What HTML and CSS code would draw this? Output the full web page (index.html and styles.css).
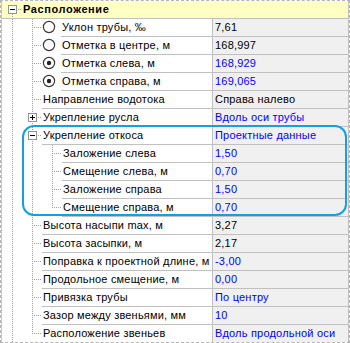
FILE: index.html
```html
<!DOCTYPE html>
<html lang="ru">
<head>
    <meta charset="UTF-8">
    <title>Свойства трубы</title>
    <link rel="stylesheet" href="styles.css">
</head>
<body>

<div class="frame">
    <div class="grid">
        <!-- Заголовок группы -->
        <div class="row head">
            <span class="g root"><i class="box minus"></i></span>
            <span class="label">Расположение</span>
        </div>

        <div class="row">
            <div class="name">
                <span class="g v"></span><span class="g t"></span>
                <span class="g rb"><svg width="14" height="14" viewBox="0 0 14 14"><circle cx="7" cy="7" r="5.6" fill="#fff" stroke="#3a3a3a" stroke-width="1.2"/></svg></span>
                <span class="label">Уклон трубы, ‰</span>
            </div>
            <div class="value">7,61</div>
        </div>
        <div class="row">
            <div class="name">
                <span class="g v"></span><span class="g t"></span>
                <span class="g rb"><svg width="14" height="14" viewBox="0 0 14 14"><circle cx="7" cy="7" r="5.6" fill="#fff" stroke="#3a3a3a" stroke-width="1.2"/></svg></span>
                <span class="label">Отметка в центре, м</span>
            </div>
            <div class="value">168,997</div>
        </div>
        <div class="row">
            <div class="name">
                <span class="g v"></span><span class="g t"></span>
                <span class="g rb"><svg width="14" height="14" viewBox="0 0 14 14"><circle cx="7" cy="7" r="5.6" fill="#fff" stroke="#3a3a3a" stroke-width="1.2"/><circle cx="7" cy="7" r="2.2" fill="#222"/></svg></span>
                <span class="label">Отметка слева, м</span>
            </div>
            <div class="value blue">168,929</div>
        </div>
        <div class="row">
            <div class="name">
                <span class="g v"></span><span class="g t"></span>
                <span class="g rb"><svg width="14" height="14" viewBox="0 0 14 14"><circle cx="7" cy="7" r="5.6" fill="#fff" stroke="#3a3a3a" stroke-width="1.2"/><circle cx="7" cy="7" r="2.2" fill="#222"/></svg></span>
                <span class="label">Отметка справа, м</span>
            </div>
            <div class="value blue">169,065</div>
        </div>
        <div class="row">
            <div class="name">
                <span class="g v"></span><span class="g t"></span>
                <span class="label">Направление водотока</span>
            </div>
            <div class="value">Справа налево</div>
        </div>
        <div class="row">
            <div class="name">
                <span class="g v"></span><span class="g t"><i class="box plus"></i></span>
                <span class="label">Укрепление русла</span>
            </div>
            <div class="value blue">Вдоль оси трубы</div>
        </div>
        <div class="row">
            <div class="name">
                <span class="g v"></span><span class="g t"><i class="box minus"></i></span>
                <span class="label">Укрепление откоса</span>
            </div>
            <div class="value blue">Проектные данные</div>
        </div>
        <div class="row">
            <div class="name">
                <span class="g v"></span><span class="g v"></span><span class="g t"></span>
                <span class="label">Заложение слева</span>
            </div>
            <div class="value blue">1,50</div>
        </div>
        <div class="row">
            <div class="name">
                <span class="g v"></span><span class="g v"></span><span class="g t"></span>
                <span class="label">Смещение слева, м</span>
            </div>
            <div class="value blue">0,70</div>
        </div>
        <div class="row">
            <div class="name">
                <span class="g v"></span><span class="g v"></span><span class="g t"></span>
                <span class="label">Заложение справа</span>
            </div>
            <div class="value blue">1,50</div>
        </div>
        <div class="row">
            <div class="name">
                <span class="g v"></span><span class="g v"></span><span class="g c"></span>
                <span class="label">Смещение справа, м</span>
            </div>
            <div class="value blue">0,70</div>
        </div>
        <div class="row">
            <div class="name">
                <span class="g v"></span><span class="g t"></span>
                <span class="label">Высота насыпи max, м</span>
            </div>
            <div class="value">3,27</div>
        </div>
        <div class="row">
            <div class="name">
                <span class="g v"></span><span class="g t"></span>
                <span class="label">Высота засыпки, м</span>
            </div>
            <div class="value">2,17</div>
        </div>
        <div class="row">
            <div class="name">
                <span class="g v"></span><span class="g t"></span>
                <span class="label">Поправка к проектной длине, м</span>
            </div>
            <div class="value blue">-3,00</div>
        </div>
        <div class="row">
            <div class="name">
                <span class="g v"></span><span class="g t"></span>
                <span class="label">Продольное смещение, м</span>
            </div>
            <div class="value blue">0,00</div>
        </div>
        <div class="row">
            <div class="name">
                <span class="g v"></span><span class="g t"></span>
                <span class="label">Привязка трубы</span>
            </div>
            <div class="value blue">По центру</div>
        </div>
        <div class="row">
            <div class="name">
                <span class="g v"></span><span class="g t"></span>
                <span class="label">Зазор между звеньями, мм</span>
            </div>
            <div class="value blue">10</div>
        </div>
        <div class="row last">
            <div class="name">
                <span class="g v"></span><span class="g c"></span>
                <span class="label">Расположение звеньев</span>
            </div>
            <div class="value blue">Вдоль продольной оси</div>
        </div>
    </div>

    <!-- Выделение группы "Укрепление откоса" -->
    <div class="highlight"></div>
</div>

</body>
</html>
```

FILE: styles.css
```css
body {
    margin: 0;
    background: #fff;
    font-family: "Liberation Sans", Arial, sans-serif;
    font-size: 11px;
    letter-spacing: 0.2px;
    color: #000;
}

.frame {
    position: relative;
    width: 348px;
    border: 1px dashed #b4b4b4;
}

.grid {
    border-left: 1px solid #c8c8c8;
    border-right: 1px solid #c0c0c0;
}

.row {
    display: flex;
    height: 18px;
}

.row.last {
    height: 17px;
}

.head {
    background: #ffffc4;
    border-bottom: 1px solid #c0c0c0;
    height: 17px;
}

.head .label {
    font-weight: bold;
    letter-spacing: 0.6px;
    border-bottom: none;
}

.name {
    display: flex;
    width: 210px;
    flex: none;
}

.label {
    flex: 1;
    min-width: 0;
    padding-left: 1px;
    line-height: 17px;
    height: 17px;
    border-bottom: 1px solid #c0c0c0;
    white-space: nowrap;
    overflow: hidden;
}

.value {
    flex: 1;
    min-width: 0;
    padding-left: 2px;
    line-height: 17px;
    height: 17px;
    background: #f0f0f0;
    border-left: 1px solid #c0c0c0;
    border-bottom: 1px solid #c0c0c0;
    white-space: nowrap;
    overflow: hidden;
}

.last .label,
.last .value {
    border-bottom: none;
}

.blue {
    color: #0000ff;
}

/* Линии дерева */
.g {
    position: relative;
    flex: none;
    width: 20px;
    height: 100%;
}

.g.rb {
    width: 19px;
}

.g.rb svg {
    display: block;
    margin-top: 1px;
}

.g.v::before,
.g.t::before,
.g.c::before,
.g.root::before {
    content: "";
    position: absolute;
    left: 10px;
    top: 0;
    bottom: 0;
    width: 1px;
    background: repeating-linear-gradient(to bottom, #a0a0a0 0 1px, transparent 1px 2px);
}

.g.c::before {
    bottom: auto;
    height: 9px;
}

.g.root::before {
    top: 9px;
}

.g.t::after,
.g.c::after,
.g.root::after {
    content: "";
    position: absolute;
    left: 10px;
    right: 0;
    top: 8px;
    height: 1px;
    background: repeating-linear-gradient(to right, #a0a0a0 0 1px, transparent 1px 2px);
}

.box {
    position: absolute;
    z-index: 1;
    left: 6px;
    top: 4px;
    width: 9px;
    height: 9px;
    box-sizing: border-box;
    border: 1px solid #939393;
    background: #fff;
}

.box.minus {
    background: linear-gradient(#000, #000) center / 5px 1px no-repeat, #fff;
}

.box.plus {
    background:
        linear-gradient(#000, #000) center / 5px 1px no-repeat,
        linear-gradient(#000, #000) center / 1px 5px no-repeat,
        #fff;
}

.highlight {
    position: absolute;
    left: 21px;
    top: 124px;
    width: 321px;
    height: 87px;
    border: 2px solid #14a0e0;
    border-radius: 12px;
}
```
